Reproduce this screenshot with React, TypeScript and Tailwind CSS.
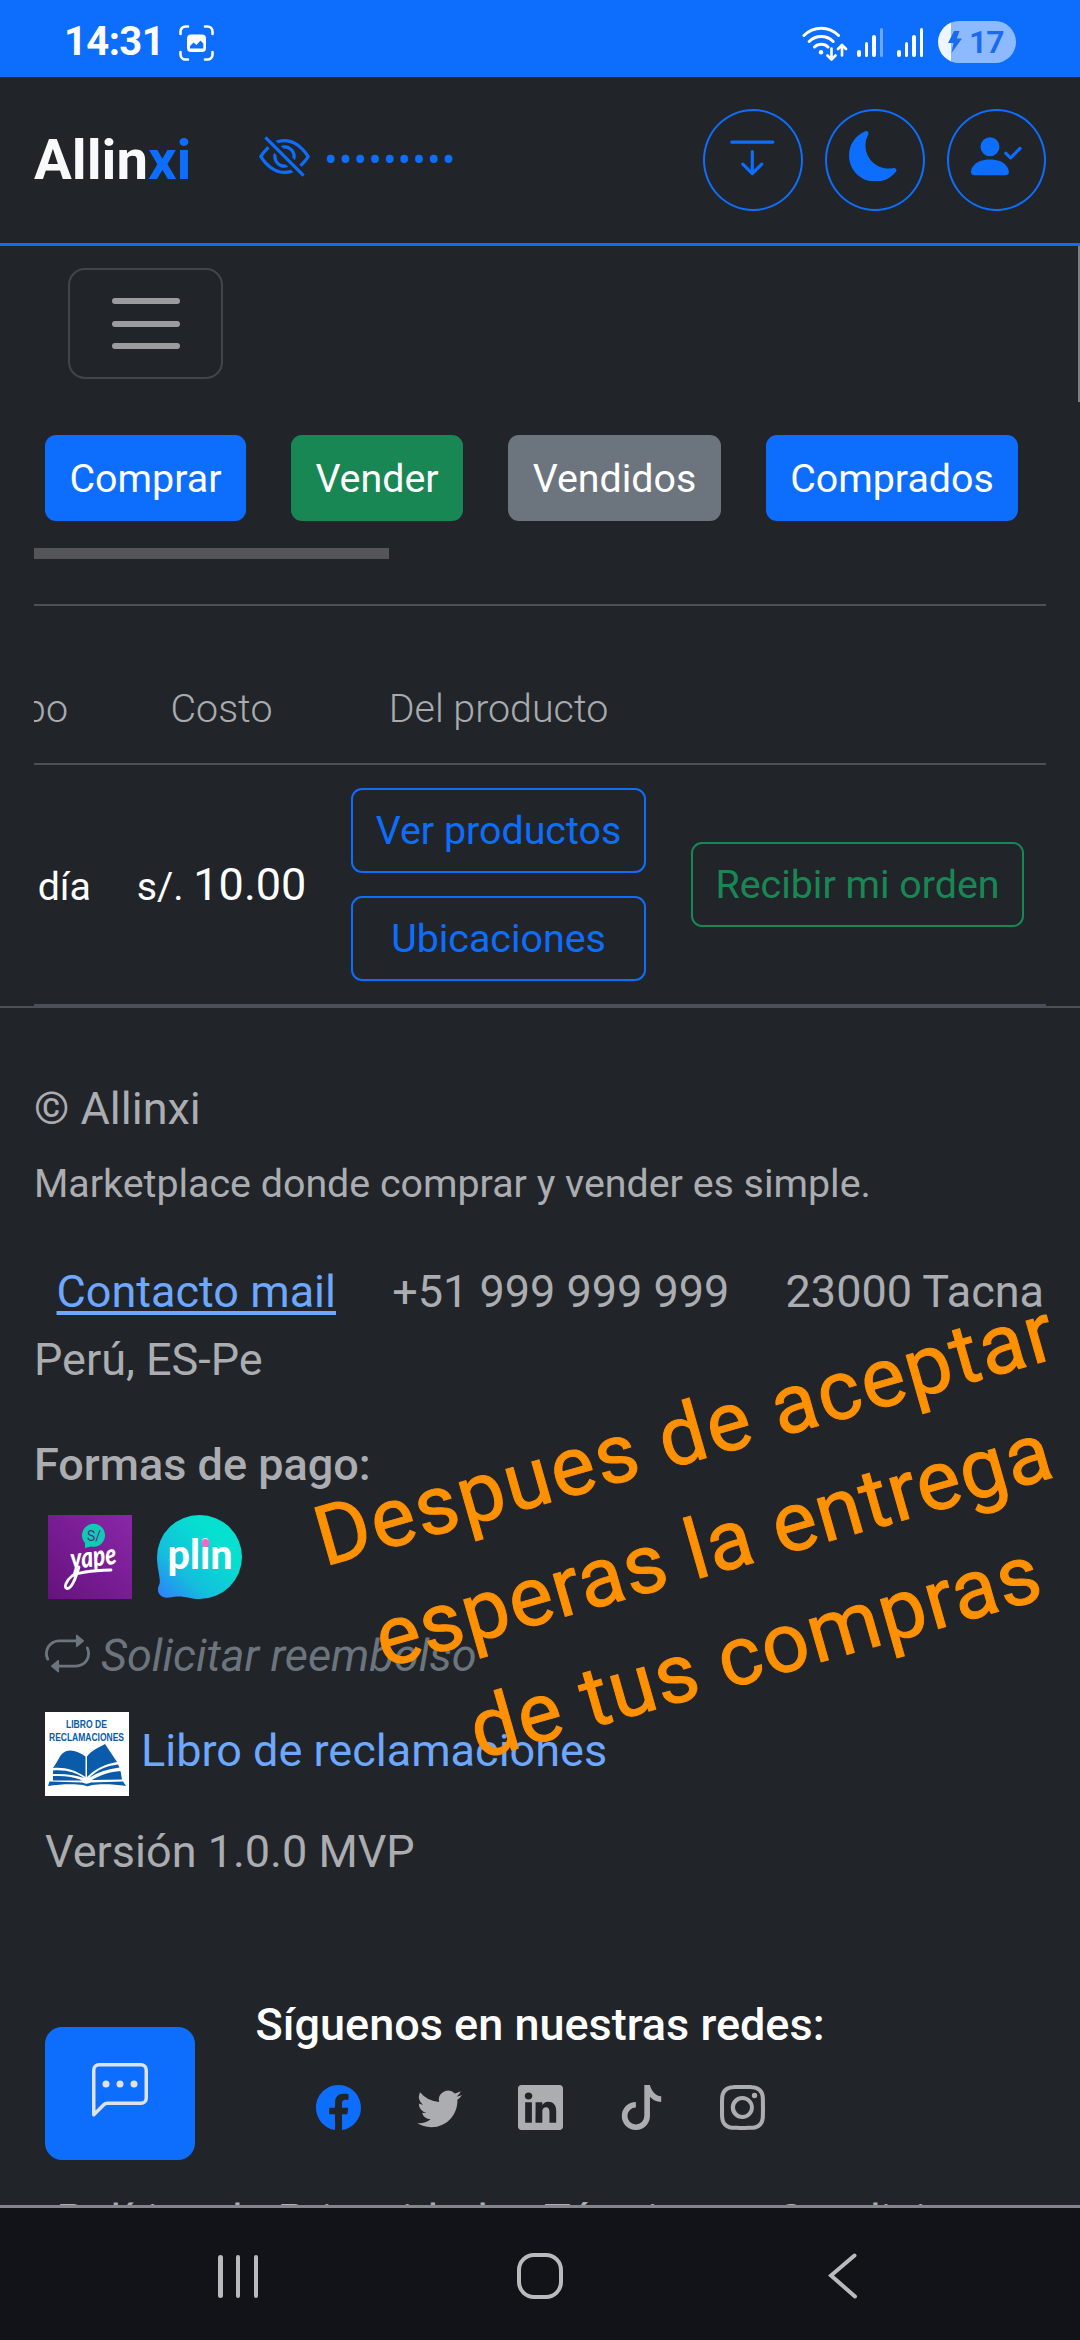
import {
  BsArrowBarDown,
  BsChatLeftDots,
  BsEyeSlash,
  BsFacebook,
  BsInstagram,
  BsLinkedin,
  BsMoonFill,
  BsPersonCheckFill,
  BsRepeat,
  BsTiktok,
  BsTwitter,
} from "react-icons/bs";

const tabs = [
  { label: "Comprar", className: "w-[201px] bg-[#0d6efd]" },
  { label: "Vender", className: "w-[172px] bg-[#198754]" },
  { label: "Vendidos", className: "w-[213px] bg-[#6c757d]" },
  { label: "Comprados", className: "w-[252px] bg-[#0d6efd]" },
];

const socials = [
  { Icon: BsFacebook, className: "text-[#0d6efd]" },
  { Icon: BsTwitter, className: "" },
  { Icon: BsLinkedin, className: "" },
  { Icon: BsTiktok, className: "" },
  { Icon: BsInstagram, className: "" },
];

function Signal({ weak }: { weak?: boolean }) {
  return (
    <div className="flex items-end gap-[4px] h-[29px]">
      <div className="w-[3.5px] h-[7px] rounded-full bg-white" />
      <div className="w-[3.5px] h-[15px] rounded-full bg-white" />
      <div className="w-[3.5px] h-[22px] rounded-full bg-white" />
      <div className={`w-[3.5px] h-[29px] rounded-full ${weak ? "bg-white/40" : "bg-white"}`} />
    </div>
  );
}

function StatusBar() {
  return (
    <div className="h-[77px] bg-[#0d6efd] flex items-center text-white px-[64px]">
      <span className="text-[40px] leading-[50px] font-bold tracking-[-0.6px] mt-[7px]">14:31</span>
      <svg className="ml-[15px] mt-[8px] w-[35px] h-[36px]" viewBox="0 0 35 36" fill="none">
        <path
          d="M1.5 9V6.5a5 5 0 0 1 5-5H9M26 1.5h2.5a5 5 0 0 1 5 5V9M33.5 27v2.5a5 5 0 0 1-5 5H26M9 34.5H6.5a5 5 0 0 1-5-5V27"
          stroke="white"
          strokeWidth="2.6"
          strokeLinecap="round"
        />
        <rect x="8" y="9.5" width="19" height="17.5" rx="4" fill="white" />
        <path d="M11 23.5v-2.5l3.5-3.5 3 2.5 4-4.5 2.8 3v5z" fill="#0d6efd" />
      </svg>

      <div className="ml-auto flex items-center">
        <svg className="w-[46px] h-[36px] mt-[8px]" viewBox="0 0 46 36" fill="none" stroke="white" strokeLinecap="round">
          <path d="M2 10.5a24 24 0 0 1 34.5 0M7.2 16.5a17 17 0 0 1 24 0M12.5 22a9.5 9.5 0 0 1 13.5 0" strokeWidth="3" />
          <circle cx="19" cy="27.3" r="2.2" fill="white" stroke="none" />
          <path d="M29.5 23.5v10M25.5 30.5l4 4 4-4M40 30.5v-10M36 24l4-4 4 4" strokeWidth="2.6" strokeLinejoin="round" />
        </svg>
        <div className="ml-[9px] mt-[8px]">
          <Signal weak />
        </div>
        <div className="ml-[14px] mt-[8px]">
          <Signal />
        </div>
        <div className="ml-[15px] mt-[7px] w-[78px] h-[42px] rounded-full overflow-hidden bg-[linear-gradient(90deg,#eff5ff_13px,#8db9fe_13px)] flex items-center text-[#1a6bee]">
          <svg className="ml-[10px] w-[14px] h-[22px]" viewBox="0 0 14 22" fill="currentColor">
            <path d="M6 0h5.5L8.8 7.5H14L3.5 22 5.5 12H0z" />
          </svg>
          <span className="ml-[7px] text-[32px] leading-[42px] font-semibold tracking-[-1px]">17</span>
        </div>
      </div>
    </div>
  );
}

function Header() {
  const circle = "h-[102px] border-2 border-[#0d6efd] rounded-[50%] flex items-center justify-center pb-2 text-[#0d6efd]";
  return (
    <header className="h-[169px] border-b-[3px] border-[#0d6efd] flex items-center px-[34px]">
      <h1 className="text-[56.25px] font-bold text-[#f8f9fa]">
        Allin<span className="text-[#0d6efd]">xi</span>
      </h1>
      <BsEyeSlash className="ml-[67px] mb-2 w-[51px] h-[51px] text-[#0d6efd]" />
      <span className="ml-[15px] text-[38px] leading-[50px] text-[#0d6efd] tracking-[1.9px]">•••••••••</span>
      <div className="ml-auto flex gap-[22.5px]">
        <button className={`w-[100px] ${circle}`}>
          <BsArrowBarDown className="w-[50.6px] h-[50.6px]" />
        </button>
        <button className={`w-[99.5px] ${circle}`}>
          <BsMoonFill className="w-[50.6px] h-[50.6px]" />
        </button>
        <button className={`w-[99px] ${circle}`}>
          <BsPersonCheckFill className="w-[50.6px] h-[50.6px]" />
        </button>
      </div>
    </header>
  );
}

function OrdersTable() {
  return (
    <div className="mx-[34px] mt-[45px] border-t-2 border-[#4d5154]">
      <div className="h-[159px] pt-[73px] grid grid-cols-[81px_213px_341px_377px] border-b-2 border-[#4d5154] text-[39.375px] leading-[60px] font-light text-[#a9abaf]">
        <div className="flex justify-end overflow-hidden pr-[47px]">Tiempo</div>
        <div className="text-center">Costo</div>
        <div className="text-center">Del producto</div>
        <div />
      </div>
      <div className="h-[243px] grid grid-cols-[81px_213px_341px_377px] items-center border-b-4 border-[#495057] text-[39.375px] text-white">
        <div className="flex justify-end overflow-hidden whitespace-nowrap pr-[24px] leading-[60px] mt-[5px]">1 día</div>
        <div className="text-center leading-[60px] whitespace-nowrap mt-[2px]">
          s/. <span className="text-[45px]">10.00</span>
        </div>
        <div className="px-[23px] flex flex-col gap-[23px] text-[#0d6efd]">
          <button className="h-[85px] border-2 border-[#0d6efd] rounded-[11px]">Ver productos</button>
          <button className="h-[85px] border-2 border-[#0d6efd] rounded-[11px]">Ubicaciones</button>
        </div>
        <div className="px-[22px] text-[#198754]">
          <button className="w-[333px] h-[85px] border-2 border-[#198754] rounded-[11px] whitespace-nowrap">Recibir mi orden</button>
        </div>
      </div>
    </div>
  );
}

function YapeLogo() {
  return (
    <svg className="w-[84px] h-[84px]" viewBox="0 0 84 84">
      <defs>
        <linearGradient id="yape" x1="0" y1="1" x2="1" y2="0">
          <stop offset="0" stopColor="#66127e" />
          <stop offset="1" stopColor="#8a27a8" />
        </linearGradient>
      </defs>
      <rect width="84" height="84" fill="url(#yape)" />
      <path d="M37 33V28a11.5 11.5 0 1 1 6 3.5z" fill="#10cbb4" />
      <text x="46" y="26" textAnchor="middle" fontFamily="Roboto" fontSize="14" fill="#5a2a8a">
        S/
      </text>
      <g transform="rotate(-7 46 48)" fill="white">
        <text x="23" y="51.5" fontFamily="Lato" fontStyle="italic" fontWeight="900" fontSize="29" textLength="46" lengthAdjust="spacingAndGlyphs">
          yape
        </text>
      </g>
      <path
        d="M31 52C28 62 24 74 19 73.5c-3.5-.5-1-8 5-12.5 5-3.5 22-5.5 39-6"
        fill="none"
        stroke="white"
        strokeWidth="2.8"
        strokeLinecap="round"
      />
    </svg>
  );
}

function PlinLogo() {
  return (
    <svg className="w-[85px] h-[84px]" viewBox="0 0 85 84">
      <defs>
        <linearGradient id="plin" x1="0" y1="1" x2="0.7" y2="0.3">
          <stop offset="0" stopColor="#2f7bff" />
          <stop offset="0.45" stopColor="#14bfdc" />
          <stop offset="1" stopColor="#05e0d0" />
        </linearGradient>
      </defs>
      <path
        d="M42.5 0A42.5 42 0 0 1 42.5 84C34 84 28 81 20 81.5 14 82 10 83.5 6 82 0 79 0 74 2.5 69 4 64 0 54 0 42A42.5 42 0 0 1 42.5 0z"
        fill="url(#plin)"
      />
      <text x="10.5" y="54" fontFamily="Lato" fontWeight="900" fontSize="41" fill="white" textLength="65" lengthAdjust="spacingAndGlyphs">
        plin
      </text>
      <circle cx="48.5" cy="28" r="4" fill="#f06cc4" />
    </svg>
  );
}

function LibroLogo() {
  return (
    <svg className="w-[84px] h-[84px]" viewBox="0 0 84 84" fill="#0a5ba9">
      <rect width="84" height="84" fill="white" />
      <g fontFamily="Liberation Sans" fontWeight="700" fontSize="11.5">
        <text x="21" y="15.5" textLength="41" lengthAdjust="spacingAndGlyphs">
          LIBRO DE
        </text>
        <text x="4" y="28.5" textLength="75" lengthAdjust="spacingAndGlyphs">
          RECLAMACIONES
        </text>
      </g>
      <path d="M8 56C13 49 15 43 18 41c6-5 15-2 22.500 3.500V65C30 58 20 55 8 56z" />
      <path d="M42 44.5C47 38 53 36 60 32l12 18C60 52 50 57 42 65z" />
      <path d="M8 58.5c13-1 23 2 31 7.500-9-3-19-4.500-31-4z" />
      <path d="M44 66c8-8 17-12 29-13.5l1.5 3C63 57 53 60 44 66z" />
      <path d="M8 64c12-.5 21 .5 29 4.5H8z" />
      <path d="M47 68c9-5.5 18-8 28.5-9l1.5 8.5z" />
      <path d="M4.5 69.5 3 74c12-2 26-2.5 35-1 3 1.5 6 1.5 9 0 9-1.5 22-1 34 1l-3-4.5-32 1c-3 1.5-6 1.5-9 0z" />
    </svg>
  );
}

function Footer() {
  return (
    <footer className="px-[34px] pt-[66.5px] text-[45px] leading-[68px] text-[#abadb1]">
      <p>© Allinxi</p>
      <p className="mt-[7px] text-[39.375px]">Marketplace donde comprar y vender es simple.</p>
      <p className="mt-[40.5px]">
        <a className="mx-[22.5px] text-[#6ea8fe] underline decoration-[4px] underline-offset-[4px]">Contacto mail</a>{" "}
        <span className="mx-[22.5px]">+51 999 999 999</span> <span className="ml-[22.5px]">23000 Tacna Perú, ES-Pe</span>
      </p>
      <p className="mt-[36.5px] font-medium">Formas de pago:</p>
      <div className="mt-[16.5px] ml-[14px] flex gap-[25px]">
        <YapeLogo />
        <PlinLogo />
      </div>
      <p className="mt-[22.5px] ml-[11px] flex items-center gap-[11px] italic text-[#6c757d]">
        <BsRepeat className="w-[45px] h-[45px] mb-[5px]" />
        Solicitar reembolso
      </p>
      <div className="mt-[22.5px] ml-[11px] flex items-center gap-[12px] text-[#6ea8fe]">
        <LibroLogo />
        <a className="mb-[7px]">Libro de reclamaciones</a>
      </div>
      <p className="mt-[22px] ml-[11px]">Versión 1.0.0 MVP</p>
      <p className="mt-[104.5px] text-center font-medium text-white">Síguenos en nuestras redes:</p>
      <div className="mt-[26px] flex justify-center gap-[56px]">
        {socials.map(({ Icon, className }, i) => (
          <Icon key={i} className={`w-[45px] h-[45px] ${className}`} />
        ))}
      </div>
      <div className="mt-[57px] ml-[22.5px] flex gap-[56px] whitespace-nowrap">
        <span>Política de Privacidad</span>
        <span>Términos y Condiciones</span>
      </div>
    </footer>
  );
}

function NavBar() {
  return (
    <nav className="h-[135px] border-t-[3px] border-[#84848c] bg-[#121318] flex items-center">
      <div className="ml-[218px] mt-[4px] w-[40px] h-[43px] flex justify-between">
        <div className="w-[4.5px] rounded-full bg-[#b9babc]" />
        <div className="w-[4.5px] rounded-full bg-[#b9babc]" />
        <div className="w-[4.5px] rounded-full bg-[#b9babc]" />
      </div>
      <div className="ml-[259px] mt-[4px] w-[46px] h-[46px] border-[4px] border-[#b9babc] rounded-[17px]" />
      <svg className="ml-[265px] mt-[4px] w-[30px] h-[46px]" viewBox="0 0 30 46" fill="none" stroke="#b9babc" strokeWidth="4" strokeLinecap="round">
        <path d="M26.5 2.5L3 22.5l24 21" />
      </svg>
    </nav>
  );
}

export default function App() {
  return (
    <div className="relative w-[1080px] h-[2340px] overflow-hidden bg-[#212529] font-[Roboto,sans-serif]">
      <StatusBar />
      <Header />

      <main className="h-[1959px] overflow-hidden">
        <div className="pt-[22px] pl-[68px]">
          <button className="w-[155px] h-[111px] border-2 border-[#424549] rounded-[17px] flex flex-col items-center justify-center gap-[16.5px]">
            <span className="w-[68px] h-[6px] rounded-full bg-[#9b9c9e]" />
            <span className="w-[68px] h-[6px] rounded-full bg-[#9b9c9e]" />
            <span className="w-[68px] h-[6px] rounded-full bg-[#9b9c9e]" />
          </button>
        </div>

        <div className="mt-[56px] pl-[45px] flex gap-[45px] text-[39.375px] text-white">
          {tabs.map((tab) => (
            <button key={tab.label} className={`h-[86px] pt-[2px] shrink-0 rounded-[11px] ${tab.className}`}>
              {tab.label}
            </button>
          ))}
        </div>
        <div className="ml-[34px] mt-[27px] w-[355px] h-[11px] bg-[#545557]" />

        <OrdersTable />
        <Footer />
      </main>

      <NavBar />

      {/* page scroll indicator */}
      <div className="absolute right-0 top-[246px] w-[2px] h-[156px] bg-[#7d8083]" />
      {/* footer top rule, runs edge to edge */}
      <div className="absolute left-0 top-[1006px] w-[34px] h-[2px] bg-[#4d5154]" />
      <div className="absolute right-0 top-[1006px] w-[34px] h-[2px] bg-[#4d5154]" />

      <button className="absolute left-[45px] top-[2027px] w-[150px] h-[133px] rounded-[17px] bg-[#0d6efd] flex items-center justify-center text-[#dee2e6]">
        <BsChatLeftDots className="w-[56px] h-[56px] mb-[5px]" />
      </button>

      <div className="absolute left-[327px] top-[1481px] origin-[0_91px] -rotate-[15.9deg] w-[752px] text-center text-[83px] leading-[114px] text-[#ff9000] whitespace-nowrap [-webkit-text-stroke:1px_#ff9000]">
        <div className="-ml-[1px] tracking-[1.9px]">Despues de aceptar</div>
        <div className="ml-[6px] tracking-[1.2px]">esperas la entrega</div>
        <div className="ml-[28px] tracking-[1.3px]">de tus compras</div>
      </div>
    </div>
  );
}
